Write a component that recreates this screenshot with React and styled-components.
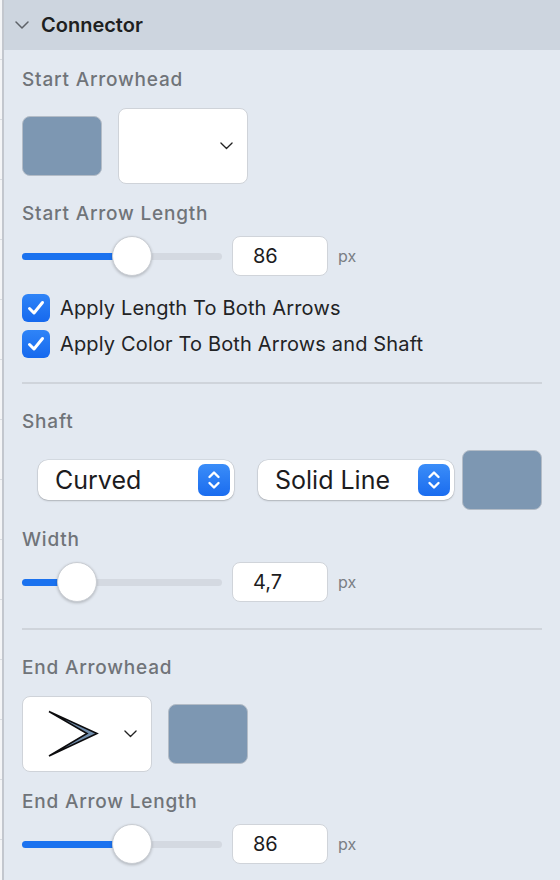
import React from "react";
import styled, { createGlobalStyle } from "styled-components";

const Global = createGlobalStyle`
  * { box-sizing: border-box; }
  html, body { margin: 0; padding: 0; background: #e3e9f1; }
  body { font-family: Inter, "Open Sans", "Liberation Sans", sans-serif; -webkit-font-smoothing: antialiased; }
`;

const Page = styled.div`
  display: flex;
  width: 560px;
  height: 880px;
  overflow: hidden;
`;

const Gutter = styled.div`
  width: 4px;
  flex: none;
  background: repeating-linear-gradient(
    to bottom,
    #f4f5f7 0px,
    #f4f5f7 59px,
    #d9dce1 59px,
    #d9dce1 60px
  );
  border-right: 2px solid #c3c7ce;
`;

const Panel = styled.div`
  flex: 1;
  display: flex;
  flex-direction: column;
  background: #e3e9f1;
`;

const Header = styled.div`
  height: 50px;
  display: flex;
  align-items: center;
  gap: 12px;
  padding-left: 11px;
  background: #cdd5df;
  font-size: 20px;
  font-weight: 600;
  color: #1e1f21;
`;

const Body = styled.div`
  display: flex;
  flex-direction: column;
  padding: 0 18px 0 18px;
`;

const Label = styled.div`
  margin-top: ${(p) => p.$mt ?? 18}px;
  padding-top: 1px;
  font-size: 19px;
  line-height: 21px;
  letter-spacing: 0.8px;
  font-weight: 500;
  color: #707479;
`;

const Row = styled.div`
  display: flex;
  align-items: center;
  margin-top: ${(p) => p.$mt ?? 18}px;
  gap: ${(p) => p.$gap ?? 16}px;
  padding-left: ${(p) => p.$pl ?? 0}px;
`;

const Swatch = styled.div`
  width: 80px;
  height: 60px;
  border-radius: 8px;
  background: #7d97b2;
  border: 1px solid #b3bcc7;
  flex: none;
`;

const ArrowPicker = styled.div`
  width: 130px;
  height: 76px;
  border-radius: 8px;
  background: #fff;
  border: 1px solid #cfd3d9;
  display: flex;
  align-items: center;
  justify-content: space-between;
  padding: 0 14px 0 ${(p) => p.$pl ?? 26}px;
  flex: none;
`;

const SliderRow = styled.div`
  display: flex;
  align-items: center;
  margin-top: 12px;
  height: 40px;
`;

const Track = styled.div`
  position: relative;
  width: 200px;
  height: 7px;
  border-radius: 4px;
  background: #d4d9e1;
  flex: none;
`;

const Fill = styled.div`
  position: absolute;
  left: 0;
  top: 0;
  bottom: 0;
  border-radius: 4px;
  background: #1b72ef;
`;

const Thumb = styled.div`
  position: absolute;
  top: 50%;
  width: 40px;
  height: 40px;
  margin: -20px 0 0 -20px;
  border-radius: 50%;
  background: #fff;
  border: 0.5px solid #c9cdd3;
  box-shadow: 0 1px 3px rgba(0, 0, 0, 0.22);
`;

const NumInput = styled.div`
  margin-left: 10px;
  width: 96px;
  height: 40px;
  border-radius: 8px;
  background: #fff;
  border: 1px solid #d0d4da;
  display: flex;
  align-items: center;
  padding-left: 20px;
  font-size: 20px;
  color: #1c1c1e;
`;

const Unit = styled.span`
  margin-left: 10px;
  font-size: 16px;
  color: #7a7e84;
`;

const CheckRow = styled.label`
  display: flex;
  align-items: center;
  gap: 10px;
  margin-top: ${(p) => p.$mt}px;
  height: 28px;
  font-size: 20px;
  letter-spacing: 0.15px;
  color: #222325;
`;

const Box = styled.span`
  width: 28px;
  height: 28px;
  border-radius: 6px;
  background: linear-gradient(#2f84f7, #1669ee);
  display: flex;
  align-items: center;
  justify-content: center;
  flex: none;
`;

const Divider = styled.div`
  margin-top: ${(p) => p.$mt}px;
  height: 2px;
  background: #cfd4db;
`;

const Select = styled.div`
  width: 196px;
  height: 40px;
  border-radius: 10px;
  background: #fff;
  box-shadow: 0 0 0 0.5px rgba(0, 0, 0, 0.12), 0 1px 2px rgba(0, 0, 0, 0.18);
  display: flex;
  align-items: center;
  justify-content: space-between;
  padding: 0 4px 0 17px;
  font-size: 25px;
  color: #1c1c1e;
  flex: none;
`;

const Stepper = styled.span`
  width: 32px;
  height: 32px;
  border-radius: 7px;
  background: linear-gradient(#3b8df8, #1a6cef);
  display: flex;
  align-items: center;
  justify-content: center;
`;

const Chevron = ({ size = 14, color = "#2a2a2a", w = 1.6 }) => (
  <svg width={size} height={size * 0.6} viewBox="0 0 14 8.4" fill="none">
    <path d="M1 1 L7 7 L13 1" stroke={color} strokeWidth={w} strokeLinecap="round" strokeLinejoin="round" />
  </svg>
);

const Slider = ({ pct }) => (
  <Track>
    <Fill style={{ width: `${pct}%` }} />
    <Thumb style={{ left: `${pct}%` }} />
  </Track>
);

const Check = () => (
  <Box>
    <svg width="18" height="16" viewBox="0 0 18 16" fill="none">
      <path d="M2.5 8.5 L7 13 L15.5 2.5" stroke="#fff" strokeWidth="3" strokeLinecap="round" strokeLinejoin="round" />
    </svg>
  </Box>
);

const StepIcon = () => (
  <Stepper>
    <svg width="14" height="22" viewBox="0 0 14 22" fill="none">
      <path d="M2.5 8 L7 3.5 L11.5 8" stroke="#fff" strokeWidth="2.4" strokeLinecap="round" strokeLinejoin="round" />
      <path d="M2.5 14 L7 18.5 L11.5 14" stroke="#fff" strokeWidth="2.4" strokeLinecap="round" strokeLinejoin="round" />
    </svg>
  </Stepper>
);

const ArrowHead = () => (
  <svg width="52" height="48" viewBox="0 0 52 48">
    <path d="M2 1.5 L50 23.5 L2 46 L40 23.5 Z" fill="#6f8cab" stroke="#0c0c0e" strokeWidth="1.6" strokeLinejoin="miter" />
  </svg>
);

export default function App() {
  return (
    <>
      <Global />
      <Page>
        <Gutter />
        <Panel>
          <Header>
            <Chevron size={14} color="#5e6268" w={1.5} />
            Connector
          </Header>
          <Body>
            <Label>Start Arrowhead</Label>
            <Row>
              <Swatch />
              <ArrowPicker>
                <span />
                <Chevron size={13} color="#222" w={1.4} />
              </ArrowPicker>
            </Row>

            <Label>Start Arrow Length</Label>
            <SliderRow>
              <Slider pct={55} />
              <NumInput>86</NumInput>
              <Unit>px</Unit>
            </SliderRow>

            <CheckRow $mt={18}>
              <Check />
              Apply Length To Both Arrows
            </CheckRow>
            <CheckRow $mt={8}>
              <Check />
              Apply Color To Both Arrows and Shaft
            </CheckRow>

            <Divider $mt={24} />

            <Label $mt={26}>Shaft</Label>
            <Row $pl={16} $gap={24}>
              <Select>
                Curved
                <StepIcon />
              </Select>
              <Select>
                Solid Line
                <StepIcon />
              </Select>
              <Swatch style={{ marginLeft: -16 }} />
            </Row>

            <Label>Width</Label>
            <SliderRow>
              <Slider pct={27.5} />
              <NumInput>4,7</NumInput>
              <Unit>px</Unit>
            </SliderRow>

            <Divider $mt={26} />

            <Label $mt={26}>End Arrowhead</Label>
            <Row>
              <ArrowPicker $pl={24}>
                <ArrowHead />
                <Chevron size={13} color="#222" w={1.4} />
              </ArrowPicker>
              <Swatch />
            </Row>

            <Label>End Arrow Length</Label>
            <SliderRow>
              <Slider pct={55} />
              <NumInput>86</NumInput>
              <Unit>px</Unit>
            </SliderRow>
          </Body>
        </Panel>
      </Page>
    </>
  );
}
